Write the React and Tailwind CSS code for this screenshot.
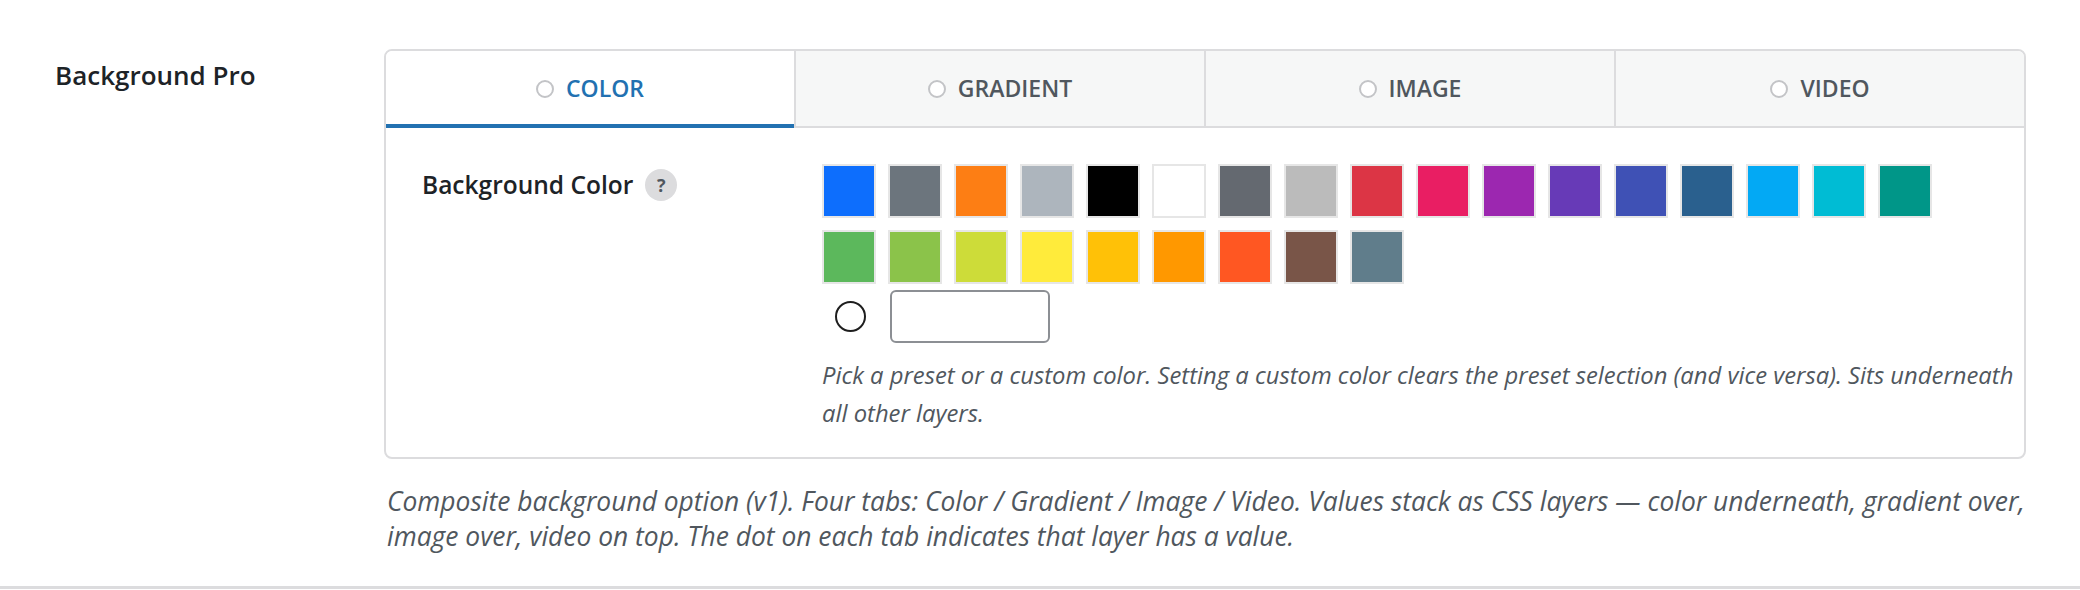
import React, { useState } from 'react';

const TABS = ['Color', 'Gradient', 'Image', 'Video'];

const PRESETS = [
    '#0d6efd', '#6c757d', '#fd7e14', '#adb5bd', '#000000', '#ffffff', '#646970', '#bbbbbb', '#dc3545',
    '#e91e63', '#9c27b0', '#673ab7', '#3f51b5', '#2a608e', '#03a9f4', '#00bcd4', '#009688',
    '#5cb85c', '#8bc34a', '#cddc39', '#ffeb3b', '#ffc107', '#ff9800', '#ff5722', '#795548', '#607d8b',
];

const Swatch = ({ color }) => (
    <button
        type="button"
        title={color}
        className="w-[54px] h-[54px] border-2 border-[#e6e6e6] p-0"
        style={{ backgroundColor: color }}
    />
);

const App = () => {
    const [active, setActive] = useState('Color');
    const [custom, setCustom] = useState('');

    return (
        <div className="w-[2080px] h-[590px] bg-white font-['Open_Sans','Noto_Sans',sans-serif] text-[#1d2327]">
            <div className="flex h-[589px] border-b-[3px] border-[#dcdcde]">
                <div className="w-[384px] shrink-0 pl-[55px] pt-[57px]">
                    <h2 className="text-[26px] leading-[36px] font-semibold">Background Pro</h2>
                </div>

                <div className="w-[1642px] shrink-0 pt-[49px]">
                    <div className="border-2 border-[#dcdcde] rounded-[8px] overflow-hidden">
                        {/* tabs */}
                        <div className="flex">
                            {TABS.map((tab, i) => {
                                const isActive = tab === active;
                                return (
                                    <button
                                        key={tab}
                                        type="button"
                                        onClick={() => setActive(tab)}
                                        className={
                                            'flex-1 h-[77px] flex items-center justify-center gap-[12px] ' +
                                            (i > 0 ? 'border-l-2 border-l-[#dcdcde] ' : '') +
                                            (isActive
                                                ? 'bg-white border-b-4 border-b-[#2271b1] text-[#2271b1] pt-[2px]'
                                                : 'bg-[#f6f7f7] border-b-2 border-b-[#dcdcde] text-[#50575e]')
                                        }
                                    >
                                        <span className="w-[18px] h-[18px] rounded-full border-2 border-[#c3c4c7] bg-white" />
                                        <span className="text-[23px] font-semibold uppercase">{tab}</span>
                                    </button>
                                );
                            })}
                        </div>

                        {/* color panel */}
                        <div className="flex pt-[36px] pl-[36px] pr-[2px] pb-[25px]">
                            <div className="w-[400px] shrink-0 pt-[4px]">
                                <div className="flex items-center gap-[12px]">
                                    <span className="text-[24.5px] leading-[34px] font-semibold">Background Color</span>
                                    <span className="w-[32px] h-[32px] rounded-full bg-[#dcdcde] text-[#50575e] text-[18px] font-bold flex items-center justify-center">
                                        ?
                                    </span>
                                </div>
                            </div>

                            <div className="flex-1">
                                <div className="w-[1120px] flex flex-wrap gap-[12px]">
                                    {PRESETS.map((c) => (
                                        <Swatch key={c} color={c} />
                                    ))}
                                </div>

                                <div className="flex items-center gap-[12px] mt-[6px]">
                                    <div className="w-[54px] flex justify-center pl-[3px]">
                                        <span className="w-[31px] h-[31px] rounded-full border-2 border-[#1e1e1e] bg-white" />
                                    </div>
                                    <input
                                        type="text"
                                        value={custom}
                                        onChange={(e) => setCustom(e.target.value)}
                                        className="ml-[2px] w-[160px] h-[53px] border-2 border-[#8c8f94] rounded-[6px] px-[10px] text-[22px] outline-none"
                                    />
                                </div>

                                <p className="w-[1198px] mt-[14px] text-[23.8px] leading-[37.5px] italic text-[#50575e]">
                                    Pick a preset or a custom color. Setting a custom color clears the preset selection (and vice versa). Sits underneath all other layers.
                                </p>
                            </div>
                        </div>
                    </div>

                    <p className="w-[1660px] mt-[25px] pl-[3px] text-[26.4px] leading-[35px] italic text-[#50575e]">
                        Composite background option (v1). Four tabs: Color / Gradient / Image / Video. Values stack as CSS layers — color underneath, gradient over, image over, video on top. The dot on each tab indicates that layer has a value.
                    </p>
                </div>
            </div>
        </div>
    );
};

export default App;
